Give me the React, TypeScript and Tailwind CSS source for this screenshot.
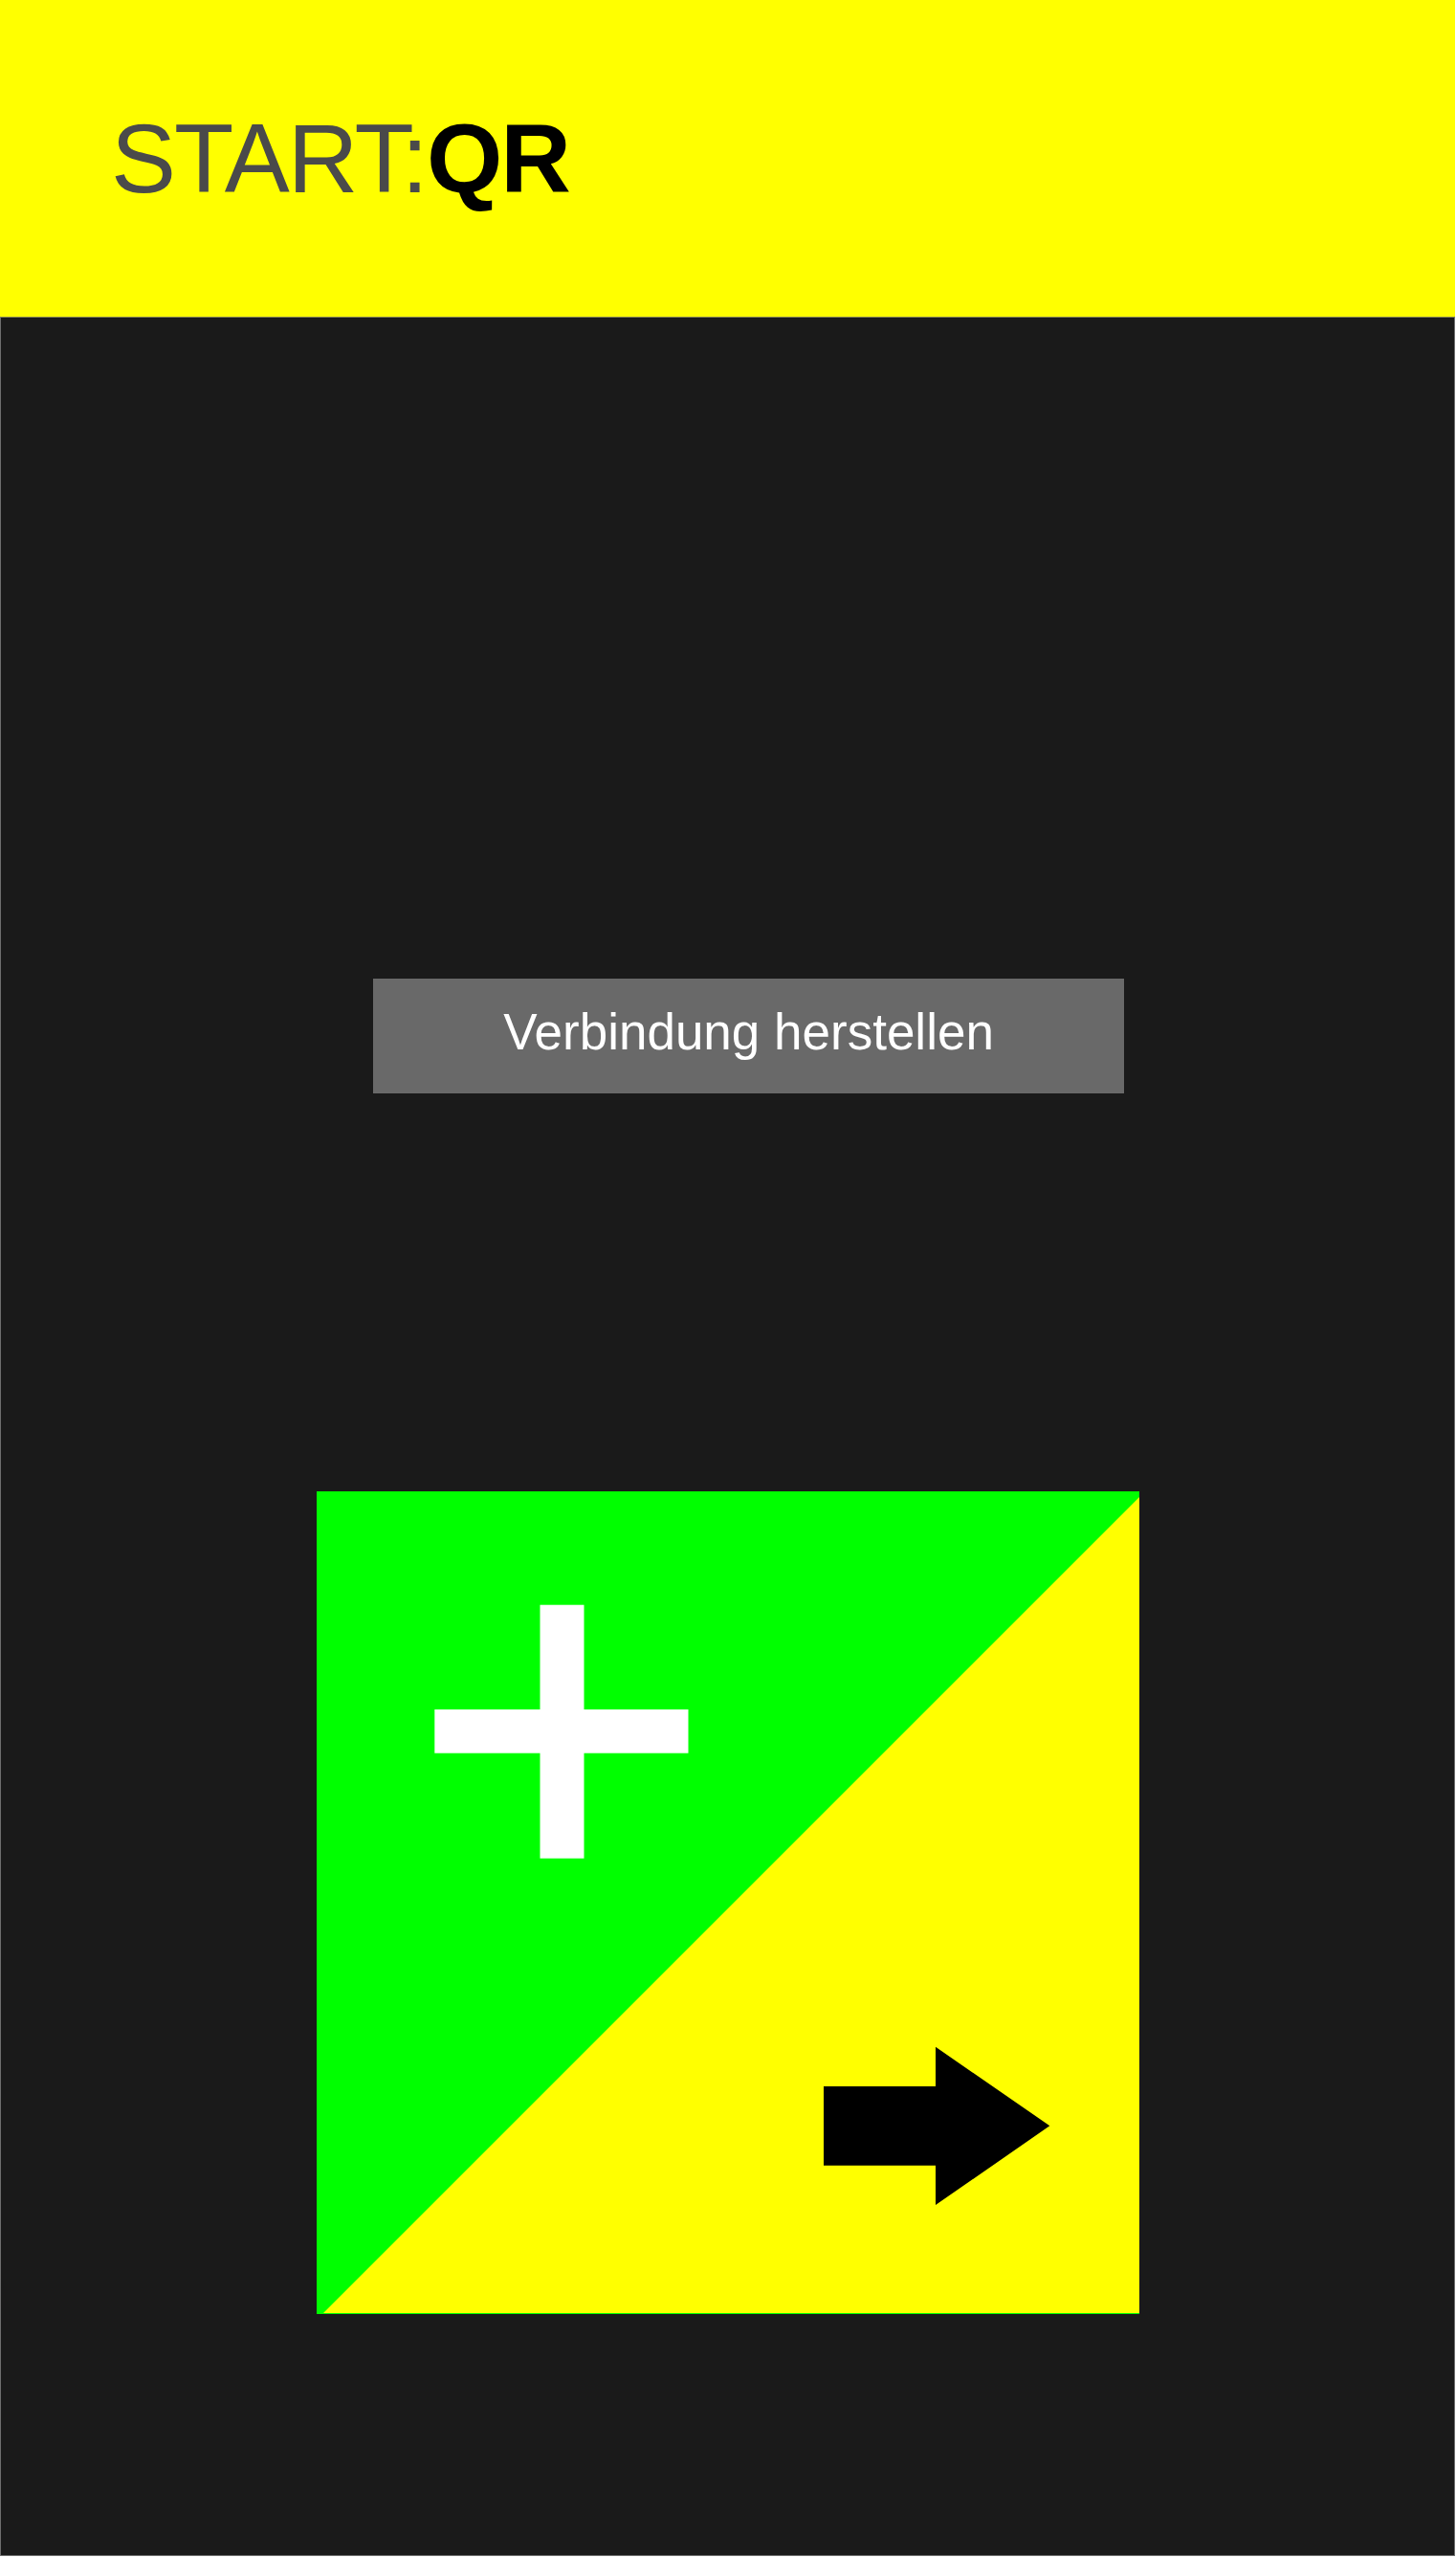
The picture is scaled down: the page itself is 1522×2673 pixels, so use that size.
import React from "react";

function Tile() {
  return (
    <svg width="860" height="860" viewBox="0 0 860 860" className="block">
      <rect x="0" y="0" width="860" height="860" fill="#00ff00" />
      <polygon points="860,6 860,859 7,859" fill="#ffff00" />
      <rect x="233.5" y="118.7" width="46" height="265" fill="#ffffff" />
      <rect x="123.3" y="228" width="265.2" height="45.7" fill="#ffffff" />
      <polygon
        points="530,622 647,622 647,580.7 766.3,663.3 647,746 647,704.7 530,704.7"
        fill="#000000"
      />
    </svg>
  );
}

export default function App() {
  return (
    <div className="w-[1521px] h-[2672px] bg-white" style={{ fontFamily: '"Liberation Sans", Arial, sans-serif' }}>
      <header className="h-[331px] bg-[#ffff00] pl-[116px] pt-[115px]">
        <h1 className="text-[102px] leading-none tracking-[-2px] whitespace-nowrap">
          <span className="text-[#4a4a4a] font-normal">START:</span>
          <span className="text-black font-bold">QR</span>
        </h1>
      </header>
      <main className="h-[2341px] bg-[#1a1a1a] border border-[#6e6e6e] border-t-[#8a8a55] flex flex-col">
        <button className="mt-[691px] ml-[389px] w-[785px] h-[120px] bg-[#696969] flex justify-center items-start pt-[29px] text-white text-[53px] leading-none">
          Verbindung herstellen
        </button>
        <div className="mt-[416px] mx-auto w-[860px] h-[860px]">
          <Tile />
        </div>
      </main>
    </div>
  );
}
